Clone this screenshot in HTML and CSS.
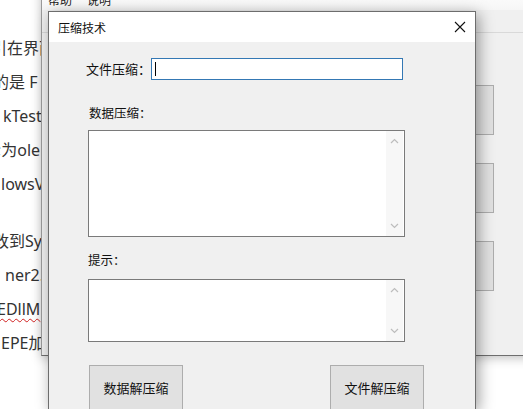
FILE: index.html
```html
<!DOCTYPE html>
<html>
<head>
<meta charset="utf-8">
<link rel="stylesheet" href="styles.css">
</head>
<body>
<div class="doc">
  <div class="line in9">引在界面</div>
  <div class="line in6">的是 F</div>
  <div class="line in0">kTest</div>
  <div class="line in3">;为ole</div>
  <div class="line in1">lowsV</div>
  <div class="blank"></div>
  <div class="line in6">改到Sy</div>
  <div class="line in0"><span class="pad5">ner2.</span></div>
  <div class="line in3"><span class="wavy">EDllM</span></div>
  <div class="line in2">EPE加</div>
</div>

<div class="parent">
  <div class="menubar"><span>帮助</span><span>说明</span></div>
  <div class="toolbar"></div>
  <div class="pcontent">
    <div class="pbtn"></div>
    <div class="pbtn"></div>
    <div class="pbtn"></div>
  </div>
</div>

<div class="dialog">
  <div class="titlebar">
    <span class="title">压缩技术</span>
    <svg class="close" width="12" height="12" viewBox="0 0 12 12"><path d="M1 1 L11 11 M11 1 L1 11" stroke="#111" stroke-width="1.1" fill="none"/></svg>
  </div>
  <div class="dbody">
    <div class="row1">
      <span class="lbl1">文件压缩：</span>
      <div class="input"><span class="caret"></span></div>
    </div>
    <div class="lbl lbl2">数据压缩：</div>
    <div class="tbox tbox1">
      <div class="tarea"></div>
      <div class="sbar">
        <svg width="9" height="6" viewBox="0 0 9 6"><path d="M1 5 L4.5 1.5 L8 5" stroke="#bdbdbd" stroke-width="1.2" fill="none"/></svg>
        <svg width="9" height="6" viewBox="0 0 9 6"><path d="M1 1 L4.5 4.5 L8 1" stroke="#bdbdbd" stroke-width="1.2" fill="none"/></svg>
      </div>
    </div>
    <div class="lbl lbl3">提示：</div>
    <div class="tbox tbox2">
      <div class="tarea"></div>
      <div class="sbar">
        <svg width="9" height="6" viewBox="0 0 9 6"><path d="M1 5 L4.5 1.5 L8 5" stroke="#bdbdbd" stroke-width="1.2" fill="none"/></svg>
        <svg width="9" height="6" viewBox="0 0 9 6"><path d="M1 1 L4.5 4.5 L8 1" stroke="#bdbdbd" stroke-width="1.2" fill="none"/></svg>
      </div>
    </div>
    <div class="btnrow">
      <div class="btn b1">数据解压缩</div>
      <div class="btn b2">文件解压缩</div>
    </div>
  </div>
</div>
</body>
</html>
```
FILE: styles.css
```css
* { box-sizing: border-box; }
html, body { margin: 0; padding: 0; }
body {
  width: 523px;
  height: 409px;
  overflow: hidden;
  position: relative;
  background: #fff;
  font-family: "Noto Sans", "Noto Sans CJK SC", sans-serif;
}

.doc {
  padding-top: 31px;
  width: 60px;
  overflow: hidden;
  color: #333;
  font-size: 16px;
}
.line {
  height: 34px;
  line-height: 34px;
  white-space: nowrap;
}
.blank { height: 23px; }
.in0 { text-indent: 3px; }
.in1 { text-indent: 1px; }
.in2 { text-indent: 1px; }
.in3 { text-indent: -3px; }
.in6 { text-indent: -7px; }
.in9 { text-indent: -9px; }
.pad5 { padding-left: 2px; }
.wavy {
  text-decoration: underline wavy #d02020;
  text-decoration-thickness: 1px;
  text-underline-offset: 3px;
}

.parent {
  position: absolute;
  left: 41px;
  top: -12px;
  width: 500px;
  height: 368px;
  background: #f0f0f0;
  border-left: 1px solid #9a9a9a;
  border-bottom: 1px solid #6e6e6e;
  box-shadow: 0 2px 10px rgba(0,0,0,0.25);
}
.menubar {
  height: 22px;
  background: linear-gradient(#ffffff, #f6f6f6);
  font-family: "Noto Sans CJK SC", sans-serif;
  font-size: 12px;
  line-height: 24px;
  color: #222;
  padding-left: 6px;
  display: flex;
  gap: 15px;
}
.toolbar {
  height: 23px;
  border-bottom: 1px solid #d9d9d9;
}
.pcontent {
  padding-left: 371px;
  padding-top: 52px;
  display: flex;
  flex-direction: column;
  gap: 28px;
}
.pbtn {
  width: 81px;
  height: 50px;
  background: #e1e1e1;
  border: 1px solid #adadad;
}

.dialog {
  position: absolute;
  left: 48px;
  top: 11px;
  width: 428px;
  height: 398px;
  overflow: hidden;
  background: #f0f0f0;
  border: 1px solid #6d6d6d;
  border-bottom: none;
  box-shadow: 3px 3px 14px rgba(0,0,0,0.38);
  font-family: "Noto Sans CJK SC", sans-serif;
  color: #111;
}
.titlebar {
  height: 30px;
  background: #fff;
  display: flex;
  align-items: center;
  justify-content: space-between;
  padding: 0 9px 0 9px;
}
.title { font-size: 12px; }

.dbody {
  padding: 16px 0 0 39px;
}
.row1 {
  display: flex;
  align-items: center;
  margin-left: -2px;
}
.lbl1 {
  width: 65px;
  font-size: 13px;
  line-height: 22px;
}
.input {
  width: 252px;
  height: 22px;
  background: #fff;
  border: 1px solid #3478b4;
  padding: 3px 0 0 3px;
}
.caret {
  display: block;
  width: 1px;
  height: 14px;
  background: #000;
}
.lbl {
  font-size: 12.5px;
  line-height: 16px;
  height: 16px;
}
.lbl2 { margin-top: 25px; margin-left: 1px; }
.lbl3 { margin-top: 15px; }
.tbox {
  width: 317px;
  display: flex;
  background: #fff;
  border: 1px solid #7a7a7a;
}
.tbox1 { height: 107px; margin-top: 9px; }
.tbox2 { height: 63px; margin-top: 11px; }
.tarea { flex: 1; }
.sbar {
  width: 17px;
  margin-right: 1px;
  background: #f7f7f7;
  display: flex;
  flex-direction: column;
  justify-content: space-between;
  align-items: center;
  padding: 7px 0 7px 0;
}
.btnrow {
  display: flex;
  gap: 147px;
  margin-top: 23px;
  margin-left: 1px;
}
.btn {
  height: 50px;
  background: #e1e1e1;
  border: 1px solid #adadad;
  font-size: 13px;
  display: flex;
  align-items: flex-start;
  justify-content: center;
  padding-top: 12px;
}
.b1 { width: 94px; }
.b2 { width: 94px; }
```
